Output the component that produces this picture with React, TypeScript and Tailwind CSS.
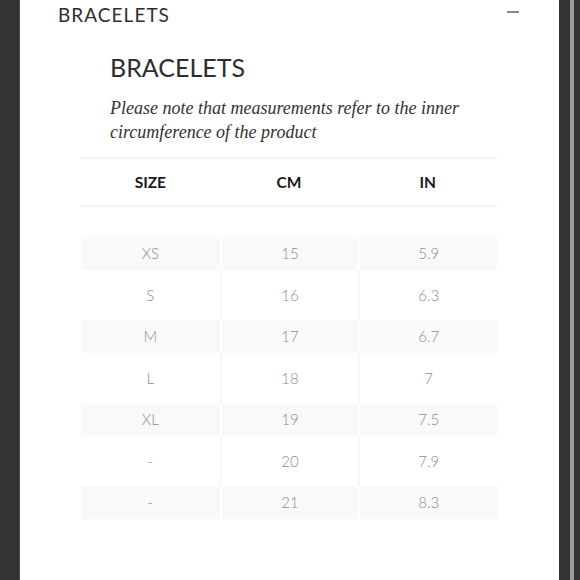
import React from "react";

const rows = [
  ["XS", "15", "5.9"],
  ["S", "16", "6.3"],
  ["M", "17", "6.7"],
  ["L", "18", "7"],
  ["XL", "19", "7.5"],
  ["-", "20", "7.9"],
  ["-", "21", "8.3"],
];

export default function App() {
  return (
    <div className="flex w-[580px] h-[580px] overflow-hidden bg-white">
      <div className="w-[20px] h-full bg-[#333333] border-r border-[#4a4a4a]" />
      <div className="flex-1 h-full bg-white flex flex-col" style={{ fontFamily: "Lato, 'Noto Sans', sans-serif" }}>
        <div className="flex items-start justify-between pl-[38px] pr-[40px] pt-[3px]">
          <div className="text-[19px] leading-[24px] tracking-[0.055em] text-[#2e2e2e]">BRACELETS</div>
          <div className="mt-[8px] w-[12px] h-[2px] bg-[#8a8a8a]" />
        </div>
        <div className="pl-[90px] pt-[24px]">
          <div className="text-[25px] leading-[32px] text-[#2e2e2e]">BRACELETS</div>
          <div
            className="mt-[13px] w-[370px] text-[18px] leading-[24px] italic text-[#333]"
            style={{ fontFamily: "'Liberation Serif', serif" }}
          >
            Please note that measurements refer to the inner circumference of the product
          </div>
        </div>
        <div className="ml-[61px] mt-[13px] w-[416px]">
          <div className="grid grid-cols-3 h-[50px] items-center border-y-2 border-[#f2f2f2] pt-[2px] text-[15.5px] font-bold text-[#1a1a1a]">
            <div className="text-center">SIZE</div>
            <div className="text-center">CM</div>
            <div className="text-center">IN</div>
          </div>
          <div className="mt-[30px] flex flex-col text-[15px] font-light text-[#8c8c8c]">
            {rows.map((r, i) => {
              const shaded = i % 2 === 0;
              return (
                <div
                  key={i}
                  className={
                    shaded
                      ? "grid grid-cols-3 h-[33px] items-stretch"
                      : "grid grid-cols-3 h-[50px] items-stretch"
                  }
                >
                  {r.map((c, j) => (
                    <div
                      key={j}
                      className={
                        (shaded ? "bg-[#f9f9f9] " : "bg-white ") +
                        (j > 0 ? (shaded ? "border-l-2 border-white " : "border-l-2 border-[#f7f7f7] ") : "") +
                        "flex items-center justify-center"
                      }
                    >
                      {c}
                    </div>
                  ))}
                </div>
              );
            })}
          </div>
        </div>
      </div>
      <div className="w-[21px] h-full flex">
        <div className="w-[11px] h-full bg-[#333333]" />
        <div className="w-[4px] h-full bg-[#9a9a9a]" />
        <div className="w-[6px] h-full bg-[#333333]" />
      </div>
    </div>
  );
}
